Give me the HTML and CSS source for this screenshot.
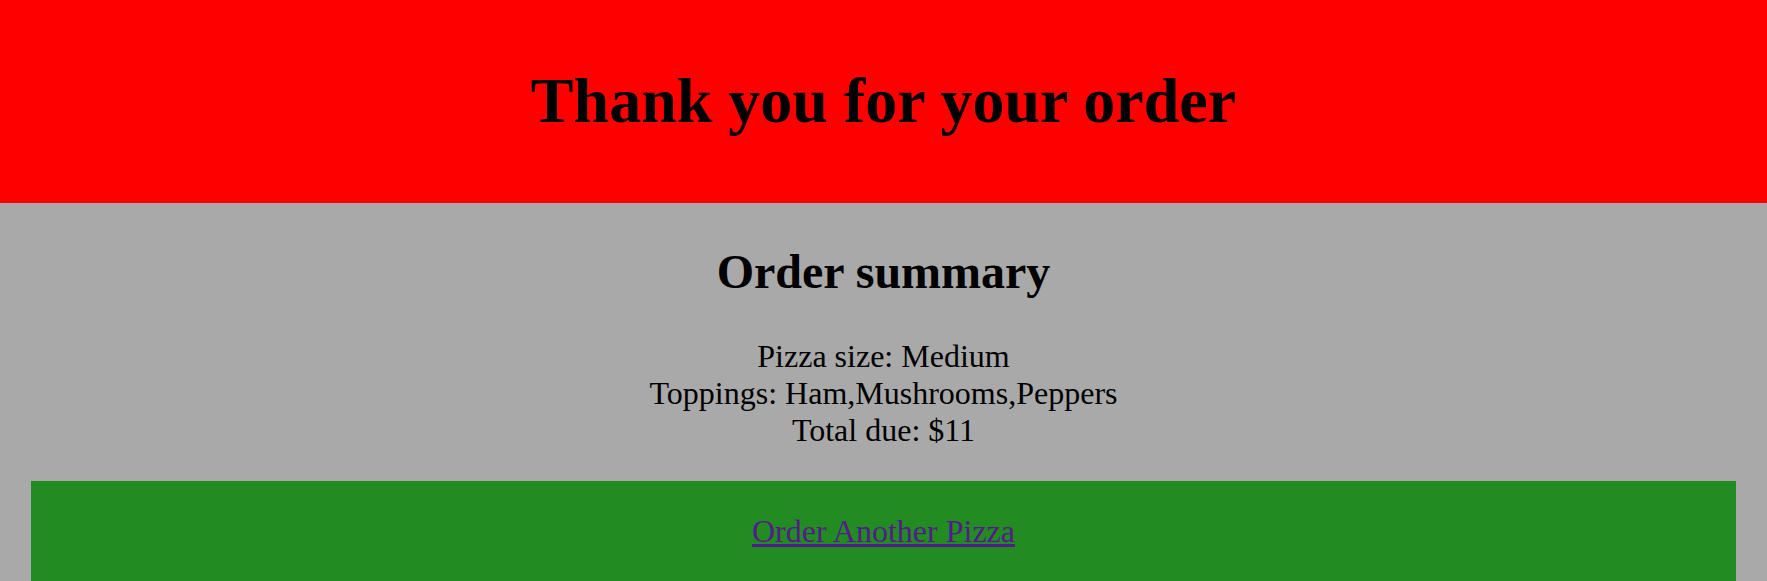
FILE: index.html
```html
<!DOCTYPE html>
<html lang="en">
<head>
<meta charset="utf-8">
<title>Thank you for your order</title>
<link rel="stylesheet" href="styles.css">
</head>
<body>
<header class="banner">
  <h1 class="banner-title">Thank you for your order</h1>
</header>
<main class="summary">
  <h2 class="summary-title">Order summary</h2>
  <p class="summary-details">
    Pizza size: Medium<br>
    Toppings: Ham,Mushrooms,Peppers<br>
    Total due: $11
  </p>
  <div class="again">
    <a class="again-link" href="#">Order Another Pizza</a>
  </div>
</main>
</body>
</html>
```

FILE: styles.css
```css
html, body {
  margin: 0;
  padding: 0;
}

body {
  font-family: "Liberation Serif", "Times New Roman", serif;
  font-size: 32px;
  color: #000;
  background: #a9a9a9;
  text-align: center;
}

.banner {
  background: #ff0000;
  padding: 21px 0 22px;
}

.banner-title {
  font-size: 64px;
  font-weight: bold;
  margin: 42.88px 0;
}

.summary {
  background: #a9a9a9;
  display: flow-root;
}

.summary-title {
  font-size: 48px;
  font-weight: bold;
  margin: 40.84px 0 39.84px;
}

.summary-details {
  margin: 32px 0;
}

.again {
  background: #228b22;
  width: 96.5%;
  margin: 0 auto;
  padding: 32px 0;
}

.again-link {
  color: #551a8b;
  text-decoration: underline;
}
```
